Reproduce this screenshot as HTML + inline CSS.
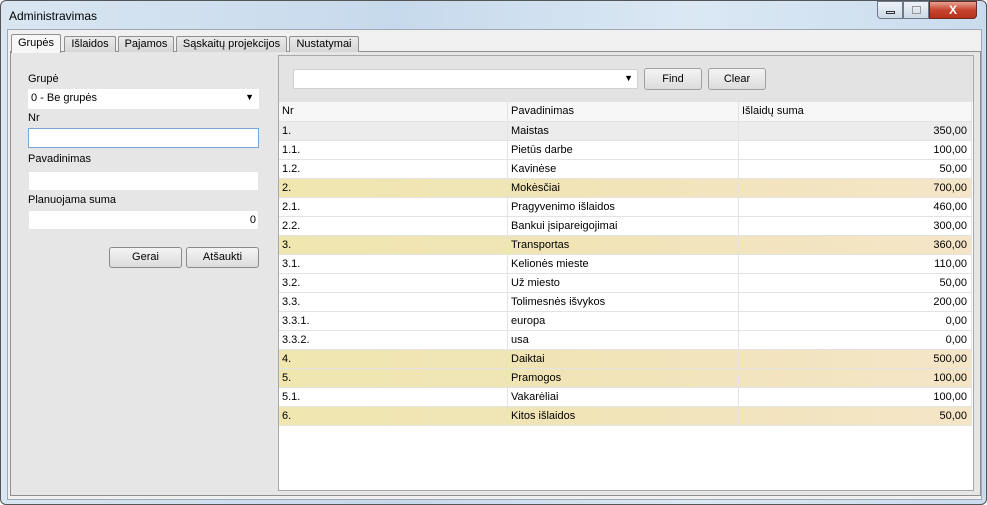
<!DOCTYPE html>
<html><head><meta charset="utf-8"><style>
*{box-sizing:border-box;margin:0;padding:0}
body{width:987px;height:505px;overflow:hidden;background:#fff;font-family:"Liberation Sans","DejaVu Sans",sans-serif;font-size:11px;color:#000;position:relative}
.win{position:absolute;left:0;top:0;width:987px;height:505px;border:1px solid #555;border-radius:6px;background:linear-gradient(90deg,#d9e6f2,#c6d9ec 40%,#dbe8f4 70%,#c9dcee);overflow:hidden}
.a{position:absolute}
.title{left:8px;top:8px;font-size:12px}
.body{left:6px;top:28px;width:975px;height:471px;background:#f0f0f0;border:1px solid #a0a8b4}
.tab{position:absolute;top:35px;height:16px;border:1px solid #8f8f8f;border-bottom:none;background:linear-gradient(#eaeaea,#d6d6d6);padding:1px 0 0;text-align:center;font-size:11px;white-space:nowrap;border-radius:2px 2px 0 0}
.tab.sel{top:33px;height:19px;background:#f7f7f7;z-index:2;padding-top:2px}
.panel{left:9px;top:50px;width:971px;height:445px;border:1px solid #8f8f8f;background:#e6e6e6}
.lbl{position:absolute;left:27px;font-size:11px}
.inp{position:absolute;left:27px;width:231px;height:20px;background:#fff;border:1px solid #e4e4e4;font-size:11px}
.btn{position:absolute;height:21px;border:1px solid #8a8a8a;border-radius:3px;background:linear-gradient(#f4f4f4,#dcdcdc);text-align:center;line-height:19px;font-size:11px}
.grid{left:277px;top:54px;width:696px;height:436px;border:1px solid #a8a8a8;background:#fff}
.row{position:absolute;left:278px;width:693px;height:19px;border-bottom:1px solid #e3e3e3}
.row div{position:absolute;top:0;height:19px;line-height:18px;padding-left:3px;border-right:1px solid #e3e3e3}
.c1{left:0;width:229px}.c2{left:229px;width:231px}.c3{left:460px;width:233px;text-align:right;padding-right:4px}
.hl{background:linear-gradient(90deg,#efe6b0,#f1e4b8 50%,#f5e5c8)}
</style></head><body>
<div class="win">
<div class="a title">Administravimas</div>
<div class="a" style="left:876px;top:0;width:26px;height:18px;border:1px solid #6a7a8c;border-radius:0 0 0 4px;background:linear-gradient(#eef3f8,#cdd9e6)"><div class="a" style="left:8px;top:9px;width:9px;height:3px;border:1px solid #333"></div></div>
<div class="a" style="left:902px;top:0;width:26px;height:18px;border:1px solid #6a7a8c;background:linear-gradient(#eef3f8,#cdd9e6)"><div class="a" style="left:8px;top:4px;width:9px;height:8px;border:1px solid #999"></div></div>
<div class="a" style="left:928px;top:0;width:48px;height:18px;border:1px solid #6a2a22;border-radius:0 0 4px 0;background:linear-gradient(#e8a294,#c7452f 50%,#b8311b);color:#fff;font-weight:bold;text-align:center;font-size:12px;line-height:16px">X</div>
<div class="a body"></div>
<div class="a panel"></div>
<div class="tab sel" style="left:10px;width:50px">Grupės</div>
<div class="tab" style="left:63px;width:52px">Išlaidos</div>
<div class="tab" style="left:117px;width:56px">Pajamos</div>
<div class="tab" style="left:175px;width:111px">Sąskaitų projekcijos</div>
<div class="tab" style="left:288px;width:70px">Nustatymai</div>

<div class="lbl" style="top:72px">Grupė</div>
<div class="inp" style="top:88px;border-color:#fff;padding:2px 2px">0 - Be grupės<span style="position:absolute;right:4px;top:2px;font-size:9px">▼</span></div>
<div class="lbl" style="top:111px">Nr</div>
<div class="inp" style="top:127px;border-color:#7aa7d8"></div>
<div class="lbl" style="top:152px">Pavadinimas</div>
<div class="inp" style="top:170px"></div>
<div class="lbl" style="top:193px">Planuojama suma</div>
<div class="inp" style="top:209px;text-align:right;padding:3px 2px">0</div>
<div class="btn" style="left:108px;top:246px;width:73px">Gerai</div>
<div class="btn" style="left:185px;top:246px;width:73px">Atšaukti</div>

<div class="a grid"><div class="a" style="left:0;top:0;right:0;height:46px;background:#e3e3e3"></div></div>
<div class="a" style="left:292px;top:68px;width:345px;height:20px;background:#fff;border:1px solid #d0d0d0"><span style="position:absolute;right:4px;top:3px;font-size:9px">▼</span></div>
<div class="btn" style="left:643px;top:67px;width:58px;height:22px;line-height:20px;border-color:#a0a0a0">Find</div>
<div class="btn" style="left:707px;top:67px;width:58px;height:22px;line-height:20px;border-color:#a0a0a0">Clear</div>

<div class="row" style="top:101px;height:20px;background:#f7f7f7"><div class="c1">Nr</div><div class="c2">Pavadinimas</div><div class="c3" style="text-align:left;padding-left:3px">Išlaidų suma</div></div>
<div class="row" style="top:121px;background:#ececec"><div class="c1">1.</div><div class="c2">Maistas</div><div class="c3">350,00</div></div>
<div class="row" style="top:140px"><div class="c1">1.1.</div><div class="c2">Pietūs darbe</div><div class="c3">100,00</div></div>
<div class="row" style="top:159px"><div class="c1">1.2.</div><div class="c2">Kavinėse</div><div class="c3">50,00</div></div>
<div class="row hl" style="top:178px"><div class="c1">2.</div><div class="c2">Mokėsčiai</div><div class="c3">700,00</div></div>
<div class="row" style="top:197px"><div class="c1">2.1.</div><div class="c2">Pragyvenimo išlaidos</div><div class="c3">460,00</div></div>
<div class="row" style="top:216px"><div class="c1">2.2.</div><div class="c2">Bankui įsipareigojimai</div><div class="c3">300,00</div></div>
<div class="row hl" style="top:235px"><div class="c1">3.</div><div class="c2">Transportas</div><div class="c3">360,00</div></div>
<div class="row" style="top:254px"><div class="c1">3.1.</div><div class="c2">Kelionės mieste</div><div class="c3">110,00</div></div>
<div class="row" style="top:273px"><div class="c1">3.2.</div><div class="c2">Už miesto</div><div class="c3">50,00</div></div>
<div class="row" style="top:292px"><div class="c1">3.3.</div><div class="c2">Tolimesnės išvykos</div><div class="c3">200,00</div></div>
<div class="row" style="top:311px"><div class="c1">3.3.1.</div><div class="c2">europa</div><div class="c3">0,00</div></div>
<div class="row" style="top:330px"><div class="c1">3.3.2.</div><div class="c2">usa</div><div class="c3">0,00</div></div>
<div class="row hl" style="top:349px"><div class="c1">4.</div><div class="c2">Daiktai</div><div class="c3">500,00</div></div>
<div class="row hl" style="top:368px"><div class="c1">5.</div><div class="c2">Pramogos</div><div class="c3">100,00</div></div>
<div class="row" style="top:387px"><div class="c1">5.1.</div><div class="c2">Vakarėliai</div><div class="c3">100,00</div></div>
<div class="row hl" style="top:406px"><div class="c1">6.</div><div class="c2">Kitos išlaidos</div><div class="c3">50,00</div></div>
</div>
</body></html>
